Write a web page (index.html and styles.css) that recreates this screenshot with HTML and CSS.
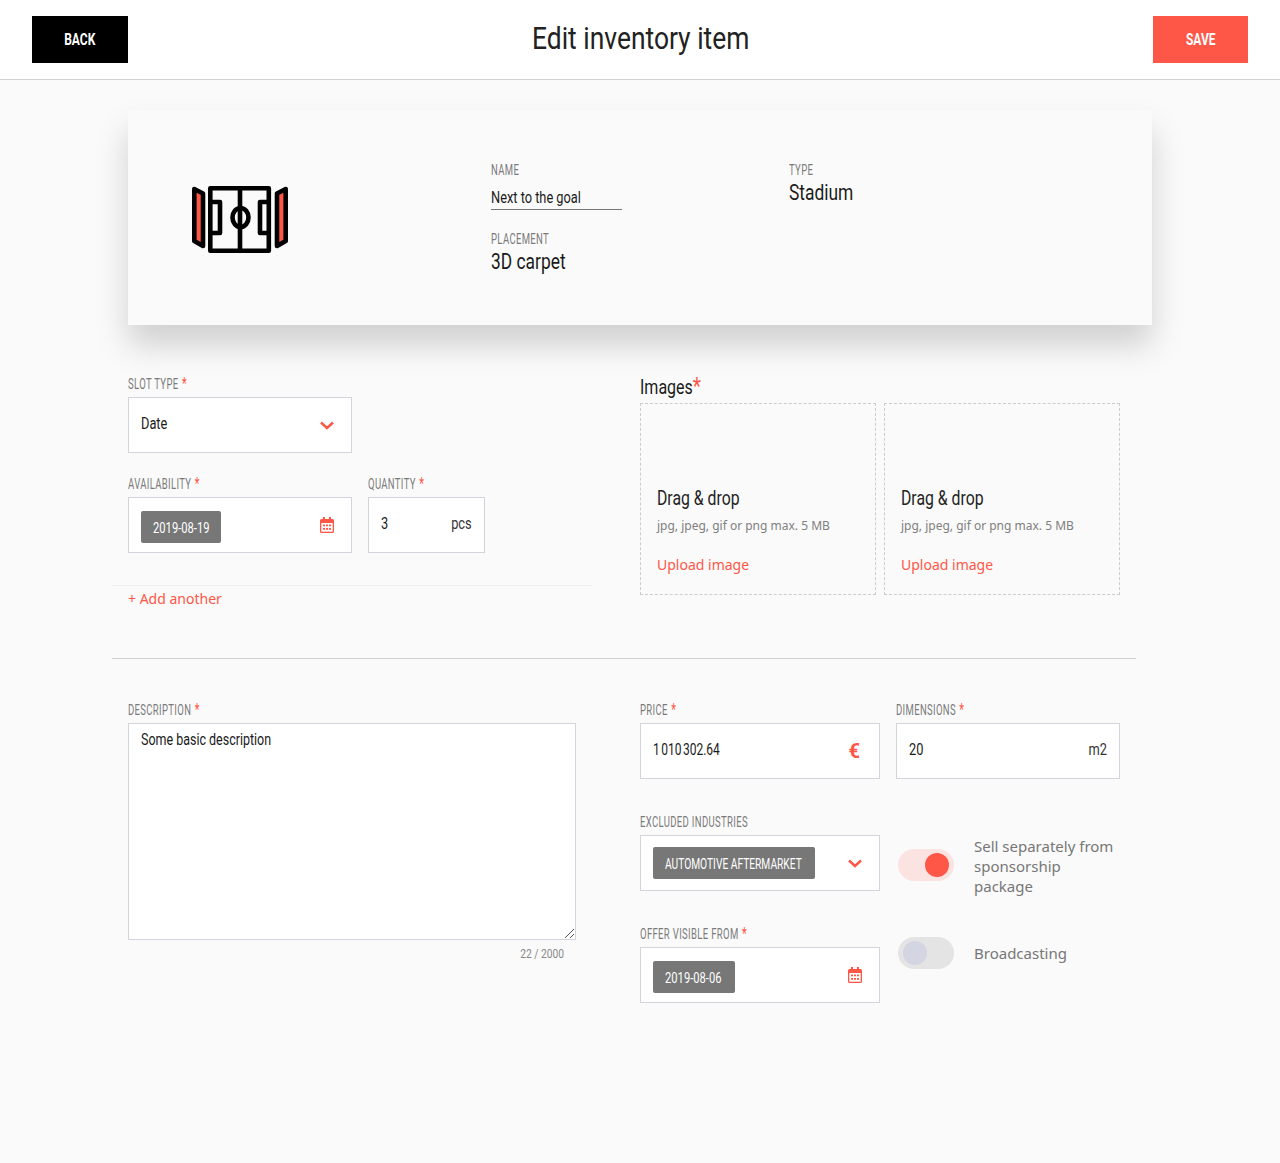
FILE: index.html
```html
<!DOCTYPE html>
<html lang="en">
<head>
  <meta charset="UTF-8">
  <title>Edit inventory item</title>
  <link rel="stylesheet" href="styles.css">
</head>
<body>
  <header class="topbar">
    <button class="btn btn-back"><span class="btn-text">BACK</span></button>
    <h1>Edit inventory item</h1>
    <button class="btn btn-save"><span class="btn-text">SAVE</span></button>
  </header>
  <main class="page">
    <section class="card">
      <div class="card-icon">
        <svg width="96" height="68" viewBox="0 0 96 68" fill="none" stroke="#000" stroke-width="4.600" stroke-linejoin="round">
          <path d="M2.300 3 L11 7.500 V60 L2.300 55 Z" fill="#ff5747"/>
          <path d="M93.700 3 L85 7.500 V60 L93.700 55 Z" fill="#ff5747"/>
          <rect x="18.300" y="2.300" width="58.500" height="62.500"/>
          <path d="M48 2 V65"/>
          <ellipse cx="48.500" cy="31.500" rx="8" ry="9.500"/>
          <path d="M18 16 H28 V47 H18"/>
          <path d="M77 16 H68 V47 H77"/>
        </svg>
      </div>
      <div class="card-fields">
        <div class="card-col">
          <div class="label">NAME</div>
          <div class="name-input"><span class="cond">Next to the goal</span></div>
          <div class="label label-placement">PLACEMENT</div>
          <div class="big-value">3D carpet</div>
        </div>
        <div class="card-col">
          <div class="label">TYPE</div>
          <div class="big-value">Stadium</div>
        </div>
      </div>
    </section>

    <section class="slots">
      <div class="slots-left">
        <div class="field field-slot">
          <div class="label">SLOT TYPE <span class="req">*</span></div>
          <div class="box">
            <span class="box-text">Date</span>
            <svg class="chev" width="14" height="9" viewBox="0 0 14 9" fill="none" stroke="#ff5747" stroke-width="2.4"><path d="M1 1.500 L7 7 L13 1.500"/></svg>
          </div>
        </div>
        <div class="slot-row">
          <div class="field field-slot">
            <div class="label">AVAILABILITY <span class="req">*</span></div>
            <div class="box">
              <span class="tag tag-date"><span class="tag-text">2019-08-19</span></span>
              <svg class="cal" width="14" height="16" viewBox="0 0 14 16"><use href="#cal-icon"/></svg>
            </div>
          </div>
          <div class="field field-qty">
            <div class="label">QUANTITY <span class="req">*</span></div>
            <div class="box">
              <span class="box-text">3</span>
              <span class="unit">pcs</span>
            </div>
          </div>
        </div>
        <div class="add-row"><a class="add-link">+ Add another</a></div>
      </div>
      <div class="slots-right">
        <div class="images-title">Images<span class="req">*</span></div>
        <div class="drops">
          <div class="drop">
            <div class="drop-title">Drag &amp; drop</div>
            <div class="drop-hint">jpg, jpeg, gif or png max. 5 MB</div>
            <a class="drop-link">Upload image</a>
          </div>
          <div class="drop">
            <div class="drop-title">Drag &amp; drop</div>
            <div class="drop-hint">jpg, jpeg, gif or png max. 5 MB</div>
            <a class="drop-link">Upload image</a>
          </div>
        </div>
      </div>
    </section>

    <section class="details">
      <div class="details-left">
        <div class="label">DESCRIPTION <span class="req">*</span></div>
        <div class="textarea">
          <span class="cond">Some basic description</span>
          <svg class="grip" width="9" height="9" viewBox="0 0 9 9" stroke="#555" stroke-width="1"><path d="M0 9 L9 0 M5 9 L9 5"/></svg>
        </div>
        <div class="counter">22 / 2000</div>
      </div>
      <div class="details-right">
        <div class="field">
          <div class="label">PRICE <span class="req">*</span></div>
          <div class="box">
            <span class="box-text box-num">1 010 302.64</span>
            <span class="euro">€</span>
          </div>
        </div>
        <div class="field">
          <div class="label">DIMENSIONS <span class="req">*</span></div>
          <div class="box">
            <span class="box-text">20</span>
            <span class="unit">m2</span>
          </div>
        </div>
        <div class="field">
          <div class="label">EXCLUDED INDUSTRIES</div>
          <div class="box">
            <span class="tag tag-wide"><span class="tag-text tag-text-wide">AUTOMOTIVE AFTERMARKET</span></span>
            <svg class="chev" width="14" height="9" viewBox="0 0 14 9" fill="none" stroke="#ff5747" stroke-width="2.4"><path d="M1 1.500 L7 7 L13 1.500"/></svg>
          </div>
        </div>
        <div class="toggle-row">
          <span class="toggle toggle-on"><span class="knob"></span></span>
          <span class="toggle-text">Sell separately from sponsorship package</span>
        </div>
        <div class="field">
          <div class="label">OFFER VISIBLE FROM <span class="req">*</span></div>
          <div class="box">
            <span class="tag tag-date tag-date-alt"><span class="tag-text">2019-08-06</span></span>
            <svg class="cal" width="14" height="16" viewBox="0 0 14 16"><use href="#cal-icon"/></svg>
          </div>
        </div>
        <div class="toggle-row toggle-row-off">
          <span class="toggle"><span class="knob"></span></span>
          <span class="toggle-text">Broadcasting</span>
        </div>
      </div>
    </section>
  </main>

  <svg class="defs" width="0" height="0">
    <symbol id="cal-icon" viewBox="0 0 14 16">
      <path fill="#ff5747" d="M3 0h2v2h4V0h2v2h1.500A1.500 1.500 0 0 1 14 3.500V14.500A1.500 1.500 0 0 1 12.500 16H1.500A1.500 1.500 0 0 1 0 14.500V3.500A1.500 1.500 0 0 1 1.500 2H3Z"/>
      <path fill="#fff" d="M1.300 6h11.400v8.700H1.300Z"/>
      <path fill="#ff5747" d="M3 7.500h2v1.700H3Zm3 0h2v1.700H6Zm3 0h2v1.700H9ZM3 11h2v1.700H3Zm3 0h2v1.700H6Zm3 0h2v1.700H9Z"/>
    </symbol>
  </svg>
</body>
</html>
```
FILE: styles.css
```css
* {
  box-sizing: border-box;
}
body {
  margin: 0;
  background: #fafafa;
  font-family: Roboto, sans-serif;
  color: #1a1a1a;
  min-height: 1163px;
}
/* the screen uses a condensed face, so Roboto gets squeezed with scaleX */
.cond {
  display: inline-block;
  white-space: nowrap;
  transform: scaleX(0.8);
  transform-origin: left center;
}
.topbar {
  height: 80px;
  background: #fff;
  border-bottom: 1px solid #d0d0d0;
  padding: 16px 32px 0;
  display: flex;
  justify-content: space-between;
  align-items: flex-start;
}
.topbar h1 {
  margin: 0;
  font-size: 32px;
  line-height: 44px;
  font-weight: 400;
  color: #222;
  transform: scaleX(0.825);
}
.btn {
  height: 47px;
  border: 0;
  font-family: inherit;
  font-size: 16px;
  font-weight: 700;
  color: #fff;
  padding: 0;
}
.btn-text {
  display: inline-block;
  transform: scaleX(0.75);
}
.btn-back {
  width: 96px;
  background: #000;
}
.btn-save {
  width: 95px;
  background: #ff5747;
}
.page {
  width: 1024px;
  margin: 0 auto;
}
.card {
  margin-top: 30px;
  height: 215px;
  background: #fafafa;
  box-shadow: 0 20px 30px rgba(0, 0, 0, 0.17);
  display: flex;
  padding: 52px 0 0 64px;
}
.card-icon {
  width: 299px;
  padding-top: 24px;
}
.card-fields {
  display: flex;
}
.card-col {
  width: 298px;
}
.label {
  font-size: 14px;
  line-height: 16px;
  letter-spacing: 0.5px;
  color: #7a7a7a;
  white-space: nowrap;
  transform: scaleX(0.68);
  transform-origin: left center;
}
.req {
  color: #ff5747;
  font-size: 16px;
  margin-left: 1px;
}
.name-input {
  width: 131px;
  margin-top: 10px;
  height: 22px;
  line-height: 20px;
  font-size: 16px;
  border-bottom: 1px solid #777;
}
.label-placement {
  margin-top: 21px;
}
.big-value {
  margin-top: 1px;
  font-size: 22px;
  line-height: 28px;
  white-space: nowrap;
  transform: scaleX(0.79);
  transform-origin: left center;
}
.slots {
  display: flex;
  margin-top: 51px;
}
.slots-left {
  width: 512px;
}
.slots-right {
  width: 480px;
}
.field-slot {
  width: 224px;
}
.field-qty {
  width: 117px;
}
.box {
  height: 56px;
  margin-top: 5px;
  background: #fff;
  border: 1px solid #d3d3de;
  padding: 0 17px 0 12px;
  display: flex;
  justify-content: space-between;
  align-items: center;
}
.box-text {
  font-size: 16px;
  margin-top: -4px;
  white-space: nowrap;
  transform: scaleX(0.8);
  transform-origin: left center;
}
.box-num {
  word-spacing: -2px;
  transform: scaleX(0.75);
}
.unit {
  font-size: 16px;
  color: #333;
  margin: -4px -5px 0 0;
  transform: scaleX(0.8);
  transform-origin: right center;
}
.slot-row {
  display: flex;
  gap: 16px;
  margin-top: 23px;
}
.tag {
  height: 32px;
  line-height: 34px;
  padding: 0 12px;
  background: #777;
  border-radius: 2px;
  color: #fff;
  font-size: 14px;
  white-space: nowrap;
}
.tag-text {
  display: inline-block;
  transform: scaleX(0.8);
  transform-origin: left center;
}
.tag-text-wide {
  transform: scaleX(0.73);
}
.tag-date {
  width: 80px;
  margin-top: 4px;
}
.tag-date-alt {
  width: 82px;
}
.tag-wide {
  width: 162px;
}
.add-row {
  margin: 32px 48px 0 -16px;
  border-top: 1px solid #f0f0f0;
  padding: 3px 0 0 16px;
}
.add-link,
.drop-link {
  font-family: "Noto Sans", sans-serif;
  font-size: 14px;
  line-height: 20px;
  color: #ff5747;
}
.images-title {
  font-size: 20px;
  line-height: 20px;
  height: 20px;
  margin-bottom: 7px;
  white-space: nowrap;
  transform: scaleX(0.8);
  transform-origin: left center;
}
.images-title .req {
  font-size: 24px;
  line-height: 20px;
  margin-left: 0;
}
.drops {
  display: flex;
  gap: 8px;
}
.drop {
  width: 236px;
  height: 192px;
  border: 1px dashed #ccc;
  padding: 81px 16px 0;
}
.drop-title {
  font-size: 20px;
  line-height: 26px;
  color: #222;
  white-space: nowrap;
  transform: scaleX(0.79);
  transform-origin: left center;
}
.drop-hint {
  font-family: "Noto Sans", sans-serif;
  font-size: 12px;
  line-height: 20px;
  color: #808080;
  margin: 5px 0 19px;
}
.details {
  margin: 49px 16px 0 -16px;
  border-top: 1px solid #d0d0d0;
  padding: 43px 16px 0;
  display: flex;
  gap: 64px;
}
.details-left {
  width: 448px;
}
.details-right {
  width: 480px;
  display: grid;
  grid-template-columns: 240px 224px;
  column-gap: 16px;
  row-gap: 35px;
  align-content: start;
}
.textarea {
  position: relative;
  height: 217px;
  margin-top: 5px;
  background: #fff;
  border: 1px solid #d3d3de;
  padding: 6px 12px;
  font-size: 16px;
  line-height: 20px;
}
.textarea .cond {
  transform: scaleX(0.78);
}
.grip {
  position: absolute;
  right: 1px;
  bottom: 1px;
}
.counter {
  margin-top: 7px;
  text-align: right;
  padding-right: 12px;
  font-size: 12px;
  color: #888;
  transform: scaleX(0.85);
  transform-origin: 436px center;
}
.euro {
  font-size: 20px;
  font-weight: 700;
  color: #ff5747;
  margin-right: 2px;
}
.toggle-row {
  display: flex;
  gap: 20px;
  align-items: center;
  padding-left: 2px;
  margin: 22px 0 -5px;
  height: 60px;
}
.toggle-row-off {
  margin: 11px 0 0;
  height: 32px;
}
.toggle {
  flex: none;
  width: 56px;
  height: 32px;
  border-radius: 16px;
  background: #e4e4e4;
  padding: 4px 5px;
  display: flex;
}
.toggle-on {
  background: #fbe3e1;
  justify-content: flex-end;
  margin-top: -2px;
}
.knob {
  width: 24px;
  height: 24px;
  border-radius: 50%;
  background: #d3d6e2;
}
.toggle-on .knob {
  background: #ff5747;
}
.toggle-text {
  font-family: "Noto Sans", sans-serif;
  font-size: 15px;
  line-height: 20px;
  color: #777;
}
.defs {
  position: absolute;
}
```
